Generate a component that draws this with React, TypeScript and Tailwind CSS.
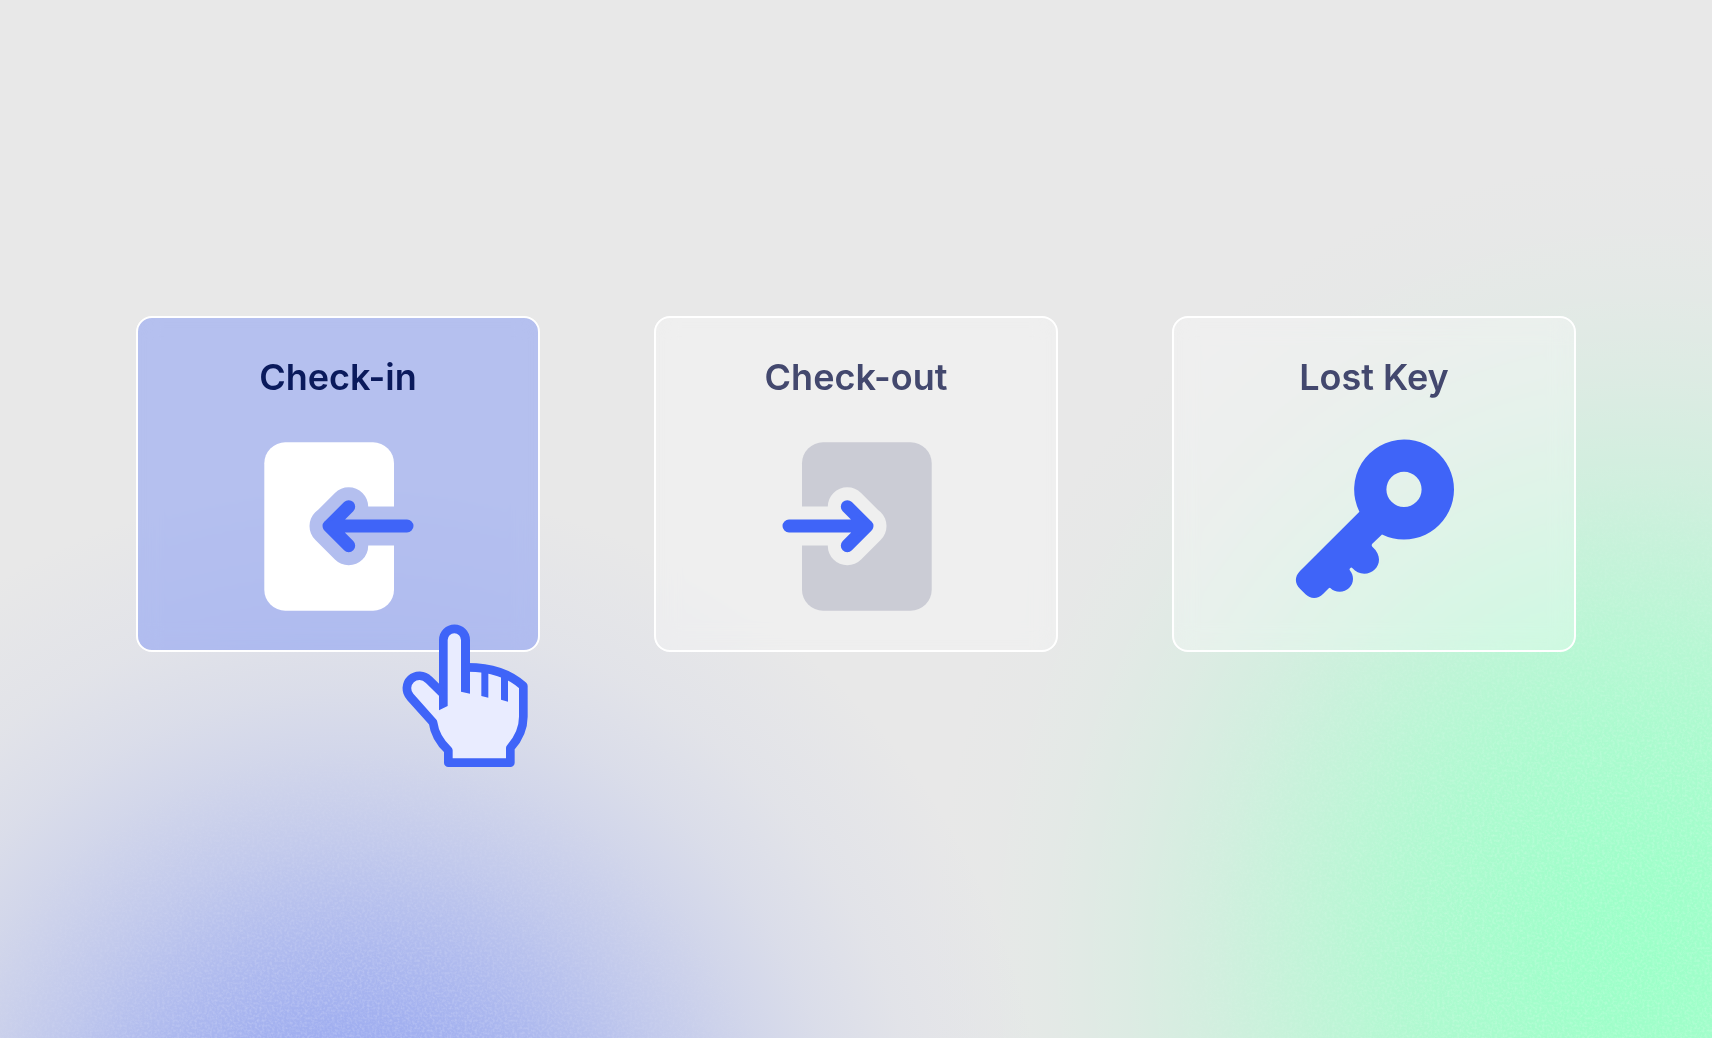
import type { ReactNode } from "react";

const ARROW = "M157 88 H79 M98.7 68.7 L79.2 88.2 L98.7 107.7";

function DoorIcon({ id, doorClass, flipped = false }: { id: string; doorClass: string; flipped?: boolean }) {
  return (
    <svg viewBox="0 0 176 176" className="size-44" fill="none" aria-hidden="true">
      <mask id={id} maskUnits="userSpaceOnUse" x="0" y="0" width="178" height="176">
        <rect width="178" height="176" fill="white" />
        <path d={ARROW} stroke="black" strokeWidth="39" strokeLinecap="round" strokeLinejoin="round" />
      </mask>
      <g transform={flipped ? "translate(178 0) scale(-1 1)" : undefined}>
        <rect x="14.3" y="4.3" width="129.7" height="168.4" rx="21" className={doorClass} mask={`url(#${id})`} />
        <path d={ARROW} className="stroke-[#3f64f8]" strokeWidth="13" strokeLinecap="round" strokeLinejoin="round" />
        <path d="M79 84 L90 77 V99 L79 92 Z" className="fill-[#3f64f8]" />
      </g>
    </svg>
  );
}

function KeyIcon() {
  return (
    <svg viewBox="0 0 176 176" className="size-44 fill-[#3f64f8]" aria-hidden="true">
      <path
        fillRule="evenodd"
        d="M118 1.5 A50 50 0 1 1 96 96.4 L86.3 105.8 Q85 107.2 86.6 109 C91 113 93 117.5 93 121.5 C93 129.5 86.5 135.7 78.3 135.7 C73.5 135.7 69.5 133.5 66.5 130.2 Q65.3 129 64.2 130.2 Q63 131.3 64 132.6 C66 135 67 138 67 141 C67 148 61 153.7 53.7 153.7 C50 153.7 46.5 152.2 44.6 150.2 Q43.8 149.2 42.8 150.2 L37 156 C32 161.3 24.5 161.3 19.5 156.3 L14 150.8 C8.5 145.5 8.5 138.5 14 133 L73.4 73.8 A50 50 0 0 1 118 1.5 Z M118 33.8 A17.6 17.6 0 1 0 118 69 A17.6 17.6 0 1 0 118 33.8 Z"
      />
    </svg>
  );
}

function HandPointer() {
  return (
    <svg
      viewBox="0 0 450 510"
      className="pointer-events-none absolute -right-0.5 -bottom-[130px] h-[170px] w-[150px]"
      fill="none"
      aria-hidden="true"
    >
      <path
        className="fill-[#e9ecff]"
        d="M160 250 V90 A33.5 33.5 0 0 1 227 90 V172 C300 170 355 185 400 228 V320 C400 360 384 390 361 414 V458 H175 V421 C150 400 133 368 129 337 L63 262 C35 225 75 175 117 209 Z"
      />
      <g className="fill-[#3f64f8]">
        <path d="M147 90 A46.5 46.5 0 0 1 240 90 V251 L213 245 V90 A20 20 0 0 0 173 90 V288 L147 301 Z" />
        <path d="M274 178 H295 V263 L274 258 Z" />
        <path d="M333 190 H354 V275 L333 269 Z" />
      </g>
      <path
        className="stroke-[#3f64f8]"
        strokeWidth="26"
        strokeLinejoin="round"
        d="M227 172 C300 171 355 187 400 228 V320 C400 358 384 388 361 414 V458 H175 V421 C150 398 133 366 129 337 L61 261 A37 37 0 0 1 116 209 L158 250"
      />
    </svg>
  );
}

function Grain() {
  return (
    <svg
      className="pointer-events-none absolute inset-0 size-full opacity-45 mask-[radial-gradient(circle_at_20.5%_1181px,black_200px,transparent_450px),radial-gradient(circle_at_96%_955px,black_200px,transparent_520px)]"
      aria-hidden="true"
    >
      <filter id="grain" x="0" y="0" width="100%" height="100%" colorInterpolationFilters="sRGB">
        <feTurbulence type="fractalNoise" baseFrequency="0.4" numOctaves="2" seed="3" />
        <feColorMatrix values="0 0 0 0 1  0 0 0 0 1  0 0 0 0 1  0.9 0 0 0 -0.35" />
      </filter>
      <rect width="100%" height="100%" filter="url(#grain)" />
    </svg>
  );
}

function ActionCard({ label, active = false, children }: { label: string; active?: boolean; children: ReactNode }) {
  return (
    <button
      type="button"
      className={`relative flex cursor-pointer flex-col items-center gap-[41px] rounded-2xl border-2 border-white pt-[39px] pb-9 text-4xl font-semibold [font-optical-sizing:none] backdrop-blur-md ${
        active ? "bg-[#4063ff]/30 text-[#0a1a5c]" : "bg-white/30 text-[#43486e]"
      }`}
    >
      <span>{label}</span>
      {children}
    </button>
  );
}

export default function App() {
  return (
    <main className="relative min-h-screen bg-[#e8e8e8] bg-[radial-gradient(circle_at_20.5%_1181px,rgba(112,136,245,0.66)_0px,rgba(112,136,245,0.6)_150px,rgba(112,136,245,0.49)_231px,rgba(112,136,245,0.41)_281px,rgba(112,136,245,0.325)_331px,rgba(112,136,245,0.25)_381px,rgba(112,136,245,0.18)_431px,rgba(112,136,245,0.115)_491px,rgba(112,136,245,0.05)_570px,rgba(112,136,245,0)_700px),radial-gradient(680px_760px_at_96%_955px,rgba(156,255,200,1)_0%,rgba(156,255,200,0.97)_10%,rgba(156,255,200,0.91)_18%,rgba(156,255,200,0.79)_31%,rgba(156,255,200,0.65)_41%,rgba(156,255,200,0.5)_50%,rgba(156,255,200,0.3)_63%,rgba(156,255,200,0.15)_76%,rgba(156,255,200,0.06)_87%,rgba(156,255,200,0.015)_96%,rgba(156,255,200,0)_105%)] px-[136px] pt-[316px] font-['Inter',sans-serif]">
      <Grain />
      <div className="grid grid-cols-3 gap-[114px]">
        <ActionCard label="Check-in" active>
          <DoorIcon id="door-in" doorClass="fill-white" />
          <HandPointer />
        </ActionCard>
        <ActionCard label="Check-out">
          <DoorIcon id="door-out" doorClass="fill-[#cbccd5]" flipped />
        </ActionCard>
        <ActionCard label="Lost Key">
          <KeyIcon />
        </ActionCard>
      </div>
    </main>
  );
}
